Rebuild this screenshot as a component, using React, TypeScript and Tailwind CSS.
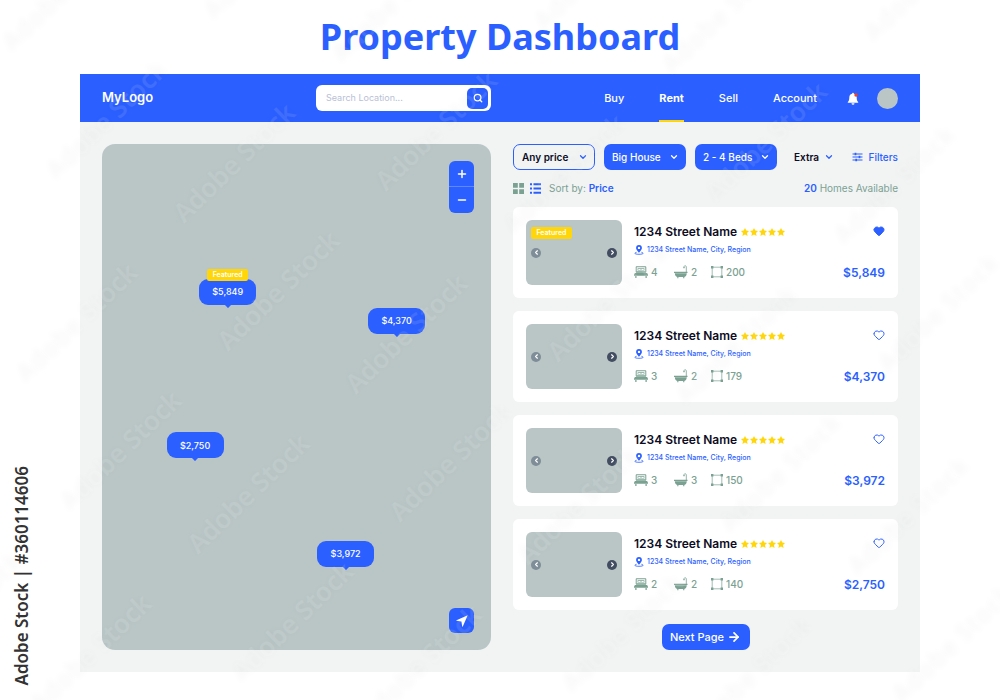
import { ArrowRight, ChevronDown, ChevronLeft, ChevronRight, Heart, Minus, Plus, Search } from 'lucide-react'
import { useState } from 'react'

interface Home {
  price: string
  beds: number
  baths: number
  area: number
  featured?: boolean
  // position of the pin on the map, in percent
  left: number
  top: number
}

const homes: Home[] = [
  { price: '$5,849', beds: 4, baths: 2, area: 200, featured: true, left: 25, top: 26.7 },
  { price: '$4,370', beds: 3, baths: 2, area: 179, left: 68.4, top: 32.4 },
  { price: '$3,972', beds: 3, baths: 3, area: 150, left: 55.3, top: 78.5 },
  { price: '$2,750', beds: 2, baths: 2, area: 140, left: 16.6, top: 57 },
]

const links = ['Buy', 'Rent', 'Sell', 'Account']

function BellIcon() {
  return (
    <svg viewBox="0 0 12 13" className="h-[13px] w-3">
      <path
        d="M6 .8c.6 0 .9.4.9.9C8.800 2.100 9.700 3.600 9.700 5.400c0 2.500.4 3.500 1.500 4.600v.8H.8V10c1.100-1.100 1.500-2.100 1.500-4.600 0-1.800.9-3.300 2.800-3.700 0-.5.3-.9.9-.9Z"
        fill="#fff"
      />
      <path d="M4.500 11.300h3a1.500 1.500 0 0 1-3 0Z" fill="#fff" />
      <circle cx="9" cy="3" r="1.700" fill="#f0441c" />
    </svg>
  )
}

function FiltersIcon() {
  return (
    <svg viewBox="0 0 11 10" className="h-[10px] w-[11px]" fill="none" stroke="#2b5fff" strokeWidth="1.100">
      <path d="M.5 2h10M.5 5h10M.5 8h10" />
      <path d="M3.500.7v2.600M7.500 3.700v2.600M4.200 6.700v2.600" strokeWidth="1.700" />
    </svg>
  )
}

function GridIcon() {
  return (
    <svg viewBox="0 0 11 11" className="size-[11px]" fill="#7ba193">
      <path d="M0 0h4.800v4.800H0zM6.200 0H11v4.800H6.200zM0 6.200h4.800V11H0zM6.200 6.200H11V11H6.200z" />
    </svg>
  )
}

function ListIcon() {
  return (
    <svg viewBox="0 0 11 11" className="size-[11px]" fill="#2b5fff">
      <path d="M0 .2h2v2H0zM3.500.2H11v2H3.500zM0 4.500h2v2H0zM3.500 4.500H11v2H3.500zM0 8.800h2v2H0zM3.500 8.800H11v2H3.500z" />
    </svg>
  )
}

function StarIcon() {
  return (
    <svg viewBox="0 0 10 10" className="size-2" fill="#ffd60a">
      <path d="M5 0 6.600 3.200l3.400.5-2.500 2.500.7 3.700L5 8.200 1.800 9.900l.7-3.700L0 3.700l3.400-.5Z" />
    </svg>
  )
}

function PlaceIcon() {
  return (
    <svg viewBox="0 0 10 10" className="size-[10px]" fill="#2b5fff">
      <path d="M5 0a2.900 2.900 0 0 0-2.900 2.900C2.100 4.700 5 7.700 5 7.700s2.900-3 2.900-4.800A2.900 2.900 0 0 0 5 0Zm0 4.100a1.200 1.200 0 1 1 0-2.400 1.200 1.200 0 0 1 0 2.400Z" />
      <path d="M2.600 7.300C-.2 7.800.2 9.300 5 9.300s5.200-1.500 2.400-2" fill="none" stroke="#2b5fff" strokeWidth=".8" />
    </svg>
  )
}

function BedIcon() {
  return (
    <svg viewBox="0 0 14 12" className="h-3 w-[14px]" fill="#7ba193">
      <path d="M1.700 6V1.200Q1.700.3 2.600.3h8.800q.9 0 .9.900V6h-1V1.300H2.700V6Z" />
      <path d="M3.600 2.200h6.800v2.400H3.600Zm.7.700v1h2.300v-1Zm3.100 0v1h2.300v-1Z" fillRule="evenodd" />
      <path d="M2.700 5.200h8.600l1 1.500H1.700ZM.9 7h12.200l.9 1.800v1H0v-1ZM1 10.200h1.700v1.500H1zM11.300 10.200H13v1.500h-1.700z" />
    </svg>
  )
}

function BathIcon() {
  return (
    <svg viewBox="0 0 14 14" className="size-[14px]" fill="#7ba193">
      <path d="M0 6.800h13.500v1.100H0zM.8 8.300h12c-.1 2-.9 3.200-2.500 3.700v1.200H9.200v-1.100H4.400v1.100H3.300V12C1.700 11.500.9 10.300.8 8.300Z" />
      <path d="M12.300 7V1.800c0-1.300-2-1.500-2.300-.2v.8M9 2.700h2" fill="none" stroke="#7ba193" strokeWidth=".8" />
    </svg>
  )
}

function AreaIcon() {
  return (
    <svg viewBox="0 0 12 12" className="size-3" fill="#7ba193">
      <path d="M1.200 1.200h9.600v9.600H1.200Z" fill="none" stroke="#7ba193" strokeWidth=".7" />
      <path d="M0 0h2.400v2.400H0zM9.600 0H12v2.400H9.600zM0 9.600h2.400V12H0zM9.600 9.600H12V12H9.600z" />
    </svg>
  )
}

function Dropdown({ label, options, look }: { label: string; options: string[]; look: 'outline' | 'solid' | 'plain' }) {
  return (
    <div className={`relative ${look === 'plain' ? 'w-12' : 'w-[82px]'}`}>
      <select
        aria-label={label}
        className={`block h-[26px] w-full appearance-none rounded-[7px] text-[10px] outline-none ${
          look === 'outline'
            ? 'border border-[#2b5fff] bg-transparent px-2 font-semibold text-[#0c0c24]'
            : look === 'solid'
              ? 'bg-[#2b5fff] px-2 font-medium text-white'
              : 'bg-transparent px-2 font-semibold text-[#0c0c24]'
        }`}
      >
        {options.map((option) => (
          <option key={option}>{option}</option>
        ))}
      </select>
      <ChevronDown
        className={`pointer-events-none absolute top-2 size-[10px] ${
          look === 'plain' ? 'right-0 text-[#2b5fff]' : look === 'solid' ? 'right-[7px] text-white' : 'right-[7px] text-[#2b5fff]'
        }`}
        strokeWidth={3}
      />
    </div>
  )
}

function Pin({ home }: { home: Home }) {
  return (
    <button
      className="absolute h-[26px] w-[57px] rounded-[9px] bg-[#2b5fff] text-[9px] font-medium text-white"
      style={{ left: `${home.left}%`, top: `${home.top}%` }}
    >
      {home.price}
      {home.featured && (
        <span className="absolute -top-[10px] left-2 h-3 w-[41px] rounded-[2px] bg-[#ffd60a] text-[7px] leading-3 font-semibold">
          Featured
        </span>
      )}
      <svg viewBox="0 0 6 3" className="absolute top-full left-1/2 h-[3px] w-[6px] -translate-x-1/2" fill="#2b5fff">
        <path d="M0 0h6L3.600 2.600q-.6.6-1.200 0Z" />
      </svg>
    </button>
  )
}

function Map() {
  return (
    <section aria-label="Map" className="relative rounded-[13px] bg-[#bac6c6]">
      {homes.map((home) => (
        <Pin key={home.price} home={home} />
      ))}
      <div className="absolute top-[17px] right-[17px] flex w-[25px] flex-col divide-y divide-[#5f87ff] overflow-hidden rounded-md bg-[#2b5fff] text-white">
        <button aria-label="Zoom in" className="flex h-[26px] items-center justify-center">
          <Plus className="size-3" strokeWidth={3} />
        </button>
        <button aria-label="Zoom out" className="flex h-[26px] items-center justify-center">
          <Minus className="size-3" strokeWidth={3} />
        </button>
      </div>
      <button
        aria-label="My location"
        className="absolute right-[17px] bottom-[17px] flex size-[25px] items-center justify-center rounded-md bg-[#2b5fff]"
      >
        <svg viewBox="0 0 12 12" className="size-3" fill="#fff">
          <path d="M11.700.3 6.800 11.500q-.3.600-.6 0L5.400 6.600.5 5.800q-.6-.3 0-.6Z" />
        </svg>
      </button>
    </section>
  )
}

function HomeCard({ home }: { home: Home }) {
  const [liked, setLiked] = useState(!!home.featured)

  return (
    <article className="flex gap-3 rounded-md bg-white p-[13px]">
      {/* Photo */}
      <div className="relative flex h-[65px] w-24 shrink-0 items-center justify-between rounded-md bg-[#bac6c6] px-[5px]">
        {home.featured && (
          <span className="absolute top-[7px] left-[5px] h-3 w-[41px] rounded-[2px] bg-[#ffd60a] text-center text-[7px] leading-3 font-semibold text-white">
            Featured
          </span>
        )}
        <button aria-label="Previous photo" className="flex size-[10px] items-center justify-center rounded-full bg-[#7f8d98] text-white">
          <ChevronLeft className="size-[7px]" strokeWidth={4} />
        </button>
        <button aria-label="Next photo" className="flex size-[10px] items-center justify-center rounded-full bg-[#434d62] text-white">
          <ChevronRight className="size-[7px]" strokeWidth={4} />
        </button>
      </div>

      {/* Details */}
      <div className="flex flex-1 flex-col">
        <div className="flex h-6 items-center gap-1">
          <h2 className="text-[12px] font-semibold whitespace-nowrap text-[#0c0c24]">1234 Street Name</h2>
          <div className="flex gap-px" role="img" aria-label="5 stars">
            {[...Array(5)].map((_, i) => (
              <StarIcon key={i} />
            ))}
          </div>
        </div>
        <p className="flex h-3 items-center gap-[3px] text-[7px] font-medium whitespace-nowrap text-[#2b5fff]">
          <PlaceIcon />
          1234 Street Name, City, Region
        </p>
        <ul className="mt-2 grid grid-cols-[40px_37px_auto] text-[10px] leading-4 font-medium text-[#7ba193]">
          <li className="flex items-center gap-[3px]">
            <BedIcon />
            {home.beds}
          </li>
          <li className="flex items-center gap-[3px]">
            <BathIcon />
            {home.baths}
          </li>
          <li className="flex items-center gap-[3px]">
            <AreaIcon />
            {home.area}
          </li>
        </ul>
      </div>

      {/* Price */}
      <div className="flex flex-col items-end justify-between pt-[5px] pb-1">
        <button aria-label="Save home" aria-pressed={liked} onClick={() => setLiked(!liked)} className="text-[#2b5fff]">
          <Heart className="size-3" strokeWidth={2} fill={liked ? '#2b5fff' : 'none'} />
        </button>
        <span className="text-[12px] leading-4 font-semibold text-[#2b5fff]">{home.price}</span>
      </div>
    </article>
  )
}

// Faint diagonal text repeated over the whole page, two marks to a cell
function Watermark() {
  const marks: { x: number; y: number }[] = []
  for (let row = -3; row < 7; row++) {
    for (let col = -4; col < 6; col++) {
      const x = 58 + row * 172 + col * 158
      const y = 183 + row * 171 - col * 160
      marks.push({ x, y }, { x: x + 128, y: y + 43 })
    }
  }
  const visible = marks.filter(({ x, y }) => x > -100 && x < 990 && y > 10 && y < 790)

  return (
    <div aria-hidden="true" className="pointer-events-none absolute inset-0 overflow-hidden select-none">
      {visible.map(({ x, y }) => (
        <span
          key={`${x},${y}`}
          className="absolute origin-bottom-left -rotate-44 font-['Noto_Sans',sans-serif] text-[26px] leading-none font-semibold whitespace-nowrap text-white/10 [text-shadow:0_0_6px_rgb(0_0_0/0.03)]"
          style={{ left: x, top: y - 26 }}
        >
          Adobe Stock
        </span>
      ))}
    </div>
  )
}

export default function App() {
  return (
    <div className="relative min-h-screen overflow-hidden bg-white px-20 pb-7 font-['Inter',sans-serif]">
      <h1 className="flex h-[74px] items-center justify-center font-['Noto_Sans',sans-serif] text-[36px] leading-none font-bold text-[#2b5fff]">
        Property Dashboard
      </h1>

      <div className="bg-[#f2f4f4]">
        {/* Top bar */}
        <header className="flex h-12 items-center justify-between bg-[#2b5fff] px-[22px] text-white">
          <div className="flex flex-1 items-center">
            <a href="#" className="w-[214px] text-[13px] font-semibold">
              MyLogo
            </a>
            <form className="flex h-[26px] w-[175px] items-center rounded-md bg-white pr-[3px] pl-[10px]">
              <input
                type="search"
                aria-label="Search location"
                placeholder="Search Location..."
                className="min-w-0 flex-1 text-[9px] text-gray-700 outline-none placeholder:text-[#b9bfd6]"
              />
              <button type="button" aria-label="Search" className="flex size-[21px] items-center justify-center rounded-[5px] bg-[#2b5fff]">
                <Search className="size-[10px]" strokeWidth={3} />
              </button>
            </form>
          </div>
          <nav className="flex h-full items-center gap-[35px] text-[11px] font-medium">
            {links.map((link) => (
              <a
                key={link}
                href="#"
                className={`flex h-full items-center border-y-2 border-t-transparent ${
                  link === 'Rent' ? 'border-b-[#ffd60a] font-bold' : 'border-b-transparent'
                }`}
              >
                {link}
              </a>
            ))}
          </nav>
          <button aria-label="Notifications" className="ml-[30px]">
            <BellIcon />
          </button>
          <button aria-label="Profile" className="ml-[18px] size-[21px] rounded-full bg-[#bac6c6]" />
        </header>

        <main className="grid grid-cols-[389fr_385fr] gap-[22px] p-[22px]">
          <Map />

          <section aria-label="Homes">
            {/* Filters */}
            <div className="flex items-center justify-between">
              <div className="flex gap-[9px]">
                <Dropdown label="Price" options={['Any price', '$3,000', '$5,000']} look="outline" />
                <Dropdown label="Type" options={['Big House', 'Flat']} look="solid" />
                <Dropdown label="Beds" options={['2 - 4 Beds', '5+ Beds']} look="solid" />
                <Dropdown label="Extra" options={['Extra', 'Pool']} look="plain" />
              </div>
              <button className="flex items-center gap-[5px] text-[10px] font-medium text-[#2b5fff]">
                <FiltersIcon />
                Filters
              </button>
            </div>

            <div className="mt-[10px] mb-[11px] flex h-4 items-center text-[10px] text-[#7ba193]">
              <button aria-label="Grid view">
                <GridIcon />
              </button>
              <button aria-label="List view" className="ml-[6px]">
                <ListIcon />
              </button>
              <span className="ml-2">
                Sort by: <button className="font-semibold text-[#2b5fff]">Price</button>
              </span>
              <span className="ml-auto">
                <strong className="font-semibold text-[#2b5fff]">20</strong> Homes Available
              </span>
            </div>

            <div className="flex flex-col gap-[13px]">
              {homes.map((home) => (
                <HomeCard key={home.price} home={home} />
              ))}
            </div>

            <button className="mx-auto mt-[14px] flex h-[26px] w-[88px] items-center justify-center gap-[3px] rounded-[7px] bg-[#2b5fff] text-[11px] font-medium whitespace-nowrap text-white">
              Next Page
              <ArrowRight className="size-[14px]" strokeWidth={3} />
            </button>
          </section>
        </main>
      </div>

      <p className="absolute bottom-[14px] left-[10px] rotate-180 font-['Noto_Sans',sans-serif] text-[17px] leading-6 font-semibold whitespace-nowrap text-[#333333] [writing-mode:vertical-rl]">
        Adobe Stock | #360114606
      </p>
      <Watermark />
    </div>
  )
}
